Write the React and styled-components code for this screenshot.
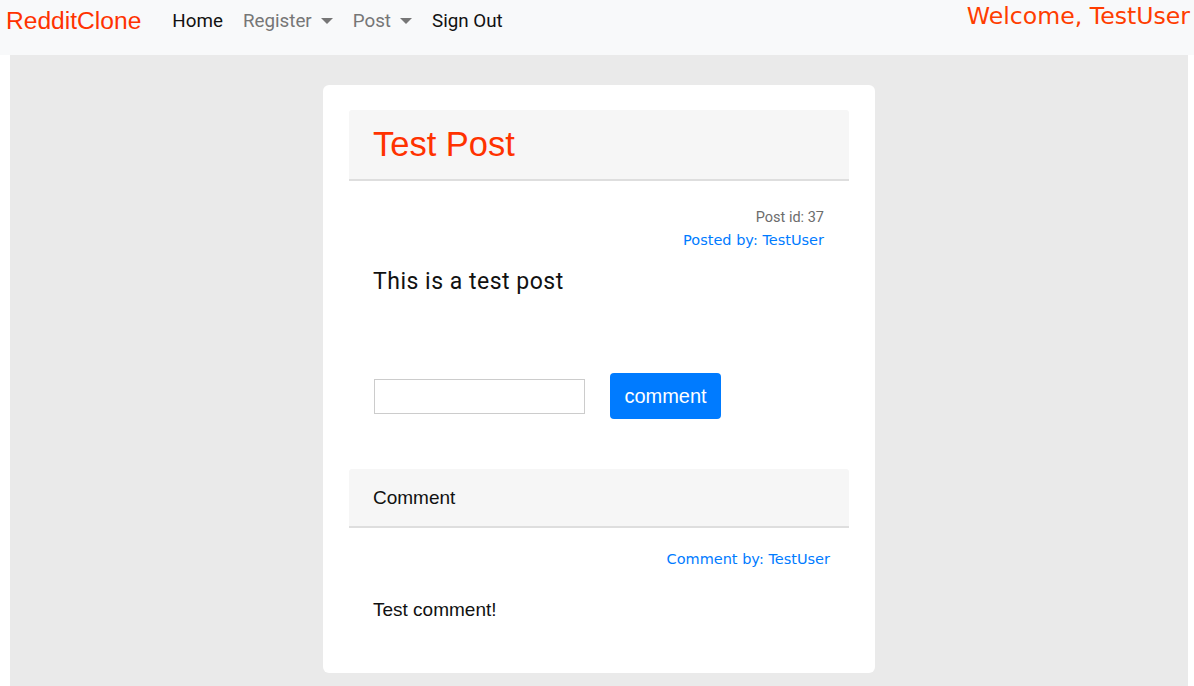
import React from "react";
import styled, { createGlobalStyle } from "styled-components";

const COLORS = {
  brand: "#ff3200",
  welcome: "#ff3d00",
  navBg: "#f8f9fa",
  pageBg: "#eaeaea",
  headerBg: "#f6f6f6",
  rule: "#dedede",
  link: "#007bff",
  muted: "#6c6c6c",
};

const GlobalStyle = createGlobalStyle`
  body {
    margin: 0;
    font-family: Roboto, "Liberation Sans", sans-serif;
    background: #ffffff;
  }
`;

const Navbar = styled.nav`
  height: 55px;
  background: ${COLORS.navBg};
  display: flex;
  align-items: flex-start;
  padding: 6px 4px 0 6px;
  box-sizing: border-box;
`;

const Brand = styled.a`
  font-family: "Liberation Sans", Arial, sans-serif;
  font-size: 24.6px;
  line-height: 30px;
  color: ${COLORS.brand};
  margin-right: 21px;
`;

const NavLink = styled.a`
  font-family: Roboto, sans-serif;
  font-size: 18.8px;
  line-height: 30px;
  padding: 0 10px;
  color: ${(p) => (p.$muted ? "#767676" : "#111111")};
  display: flex;
  align-items: center;

  ${(p) =>
    p.$dropdown &&
    `
    &::after {
      content: "";
      margin-left: 9px;
      border-top: 6px solid #767676;
      border-left: 6px solid transparent;
      border-right: 6px solid transparent;
    }
  `}
`;

const Welcome = styled.span`
  margin-left: auto;
  margin-top: -5px;
  font-family: "DejaVu Sans", Verdana, sans-serif;
  font-size: 23.6px;
  line-height: 30px;
  color: ${COLORS.welcome};
`;

const Main = styled.main`
  background: ${COLORS.pageBg};
  margin: 0 6px 0 10px;
  padding: 30px 0 14px;
  display: flex;
  justify-content: center;
`;

const Card = styled.article`
  width: 552px;
  box-sizing: border-box;
  background: #ffffff;
  border-radius: 6px;
  padding: 25px 26px 25px;
`;

const Header = styled.header`
  background: ${COLORS.headerBg};
  border-bottom: 2px solid ${COLORS.rule};
  border-radius: 3px 3px 0 0;
  height: ${(p) => p.$height}px;
  box-sizing: border-box;
  padding: 0 24px;
  display: flex;
  align-items: center;
`;

const Title = styled.h1`
  margin: 0;
  font-family: "Liberation Sans", Arial, sans-serif;
  font-weight: normal;
  font-size: 34.5px;
  color: ${COLORS.brand};
`;

const SubTitle = styled.h2`
  margin: 0;
  font-family: "Liberation Sans", Arial, sans-serif;
  font-weight: normal;
  font-size: 19px;
  color: #111111;
`;

const Meta = styled.div`
  margin-top: ${(p) => p.$top}px;
  padding-right: ${(p) => p.$right}px;
  display: flex;
  flex-direction: column;
  align-items: flex-end;
`;

const MetaId = styled.span`
  font-family: Roboto, sans-serif;
  font-size: 14.5px;
  line-height: 22px;
  color: ${COLORS.muted};
`;

const MetaAuthor = styled.a`
  font-family: "DejaVu Sans", Verdana, sans-serif;
  font-size: 14.5px;
  line-height: 22px;
  color: ${COLORS.link};
`;

const PostText = styled.p`
  margin: 15px 0 0 24px;
  font-family: Roboto, sans-serif;
  font-size: 23px;
  line-height: 32px;
  letter-spacing: 0.5px;
  color: #111111;
`;

const CommentForm = styled.form`
  margin: 75px 0 50px 25px;
  display: flex;
  align-items: center;
  gap: 25px;
`;

const Input = styled.input`
  width: 211px;
  height: 35px;
  box-sizing: border-box;
  border: 1px solid #cccccc;
  padding: 0 6px;
  font-size: 16px;
  outline: none;
`;

const Button = styled.button`
  width: 111px;
  height: 46px;
  border: none;
  border-radius: 4px;
  background: ${COLORS.link};
  color: #ffffff;
  font-family: "Liberation Sans", Arial, sans-serif;
  font-size: 20px;
  cursor: pointer;
`;

const CommentText = styled.p`
  margin: 28px 0 26px 24px;
  font-family: "Liberation Sans", Arial, sans-serif;
  font-size: 19px;
  line-height: 24px;
  color: #111111;
`;

export default function App() {
  return (
    <>
      <GlobalStyle />
      <Navbar>
        <Brand>RedditClone</Brand>
        <NavLink>Home</NavLink>
        <NavLink $muted $dropdown>
          Register
        </NavLink>
        <NavLink $muted $dropdown>
          Post
        </NavLink>
        <NavLink>Sign Out</NavLink>
        <Welcome>Welcome, TestUser</Welcome>
      </Navbar>
      <Main>
        <Card>
          <Header $height={71}>
            <Title>Test Post</Title>
          </Header>
          <Meta $top={26} $right={25}>
            <MetaId>Post id: 37</MetaId>
            <MetaAuthor>Posted by: TestUser</MetaAuthor>
          </Meta>
          <PostText>This is a test post</PostText>
          <CommentForm onSubmit={(e) => e.preventDefault()}>
            <Input type="text" />
            <Button type="submit">comment</Button>
          </CommentForm>

          <Header $height={59}>
            <SubTitle>Comment</SubTitle>
          </Header>
          <Meta $top={20} $right={19}>
            <MetaAuthor>Comment by: TestUser</MetaAuthor>
          </Meta>
          <CommentText>Test comment!</CommentText>
        </Card>
      </Main>
    </>
  );
}
